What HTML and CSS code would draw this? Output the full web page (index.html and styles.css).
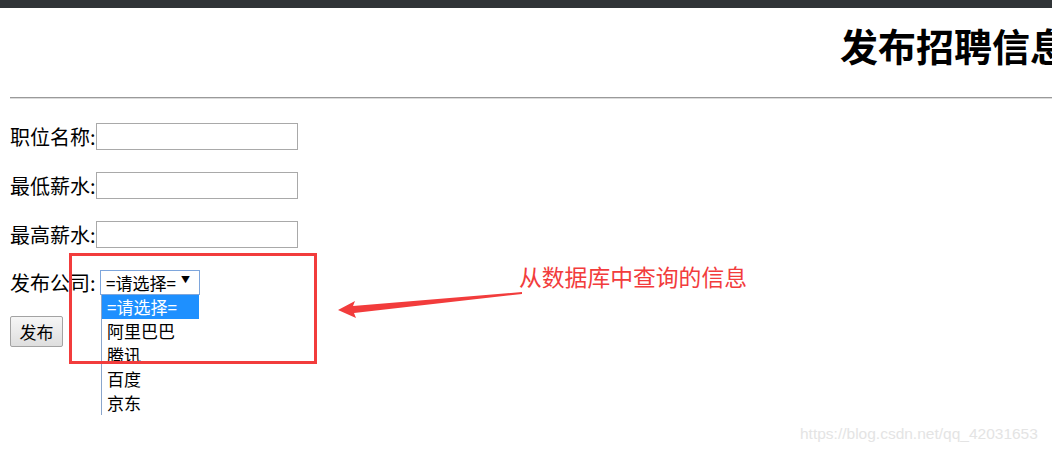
FILE: index.html
```html
<!DOCTYPE html>
<html lang="zh-CN">
<head>
    <meta charset="UTF-8">
    <meta name="viewport" content="width=device-width, initial-scale=1.0">
    <title>发布招聘信息</title>
    <link rel="stylesheet" href="styles.css">
</head>
<body>
    <div class="topbar"></div>

    <div class="page">
        <h1 class="title">发布招聘信息</h1>
        <hr class="rule">

        <form class="job-form">
            <div class="field">
                <label>职位名称:</label>
                <input type="text" class="text-input">
            </div>
            <div class="field">
                <label>最低薪水:</label>
                <input type="text" class="text-input">
            </div>
            <div class="field">
                <label>最高薪水:</label>
                <input type="text" class="text-input">
            </div>
            <div class="field field-company">
                <label>发布公司:&nbsp;</label>
                <div class="select-wrap">
                    <div class="select-box">
                        <span>=请选择=</span>
                        <span class="caret">▼</span>
                    </div>
                    <ul class="select-list">
                        <li class="active">=请选择=</li>
                        <li>阿里巴巴</li>
                        <li>腾讯</li>
                        <li>百度</li>
                        <li>京东</li>
                    </ul>
                </div>
            </div>
            <div class="actions">
                <button type="button" class="btn">发布</button>
            </div>
        </form>
    </div>

    <!-- annotation drawn over the screenshot -->
    <div class="note-box"></div>
    <svg class="note-arrow" width="1052" height="453" viewBox="0 0 1052 453">
        <polygon points="338,310 355,301 353,306 522,292 522,294 354,313 356,318" fill="#f23c3c"/>
    </svg>
    <div class="note-text">从数据库中查询的信息</div>

    <div class="watermark">https://blog.csdn.net/qq_42031653</div>
</body>
</html>
```

FILE: styles.css
```css
* {
    margin: 0;
    padding: 0;
    box-sizing: border-box;
}

body {
    width: 1052px;
    height: 453px;
    overflow: hidden;
    position: relative;
    background: #fff;
    color: #000;
    font-family: "Noto Sans CJK SC", "Noto Sans", sans-serif;
}

.topbar {
    height: 8px;
    background: #303437;
}

.page {
    padding: 0 0 0 10px;
}

.title {
    margin-top: 14px;
    padding-left: 830px;
    white-space: nowrap;
    font-size: 38px;
    line-height: 46px;
    font-weight: 700;
}

.rule {
    margin-top: 29px;
    border: none;
    border-top: 1px solid #9a9a9a;
    border-bottom: 1px solid #dcdcdc;
}

.job-form {
    display: flex;
    flex-direction: column;
    padding-top: 24px;
}

.field {
    display: flex;
    align-items: center;
    height: 27px;
    font-size: 20px;
    margin-bottom: 22px;
}

.field label {
    white-space: nowrap;
}

.text-input {
    width: 202px;
    height: 27px;
    border: 1px solid #a9a9a9;
    outline: none;
}

.field-company {
    margin-top: 0;
    height: 25px;
    margin-bottom: 0;
}

.select-wrap {
    position: relative;
}

.select-box {
    width: 100px;
    height: 25px;
    border: 1px solid #7ea6dc;
    display: flex;
    align-items: center;
    justify-content: space-between;
    padding: 0 9px 0 5px;
    font-size: 17px;
}

.caret {
    font-size: 9px;
    margin-top: -7px;
}

.select-list {
    position: absolute;
    top: 25px;
    left: 1px;
    width: 98px;
    list-style: none;
    border-left: 1px solid #8aa6cc;
    font-size: 17px;
    background: #fff;
}

.select-list li {
    height: 24px;
    line-height: 24px;
    padding-left: 5px;
}

.select-list li.active {
    background: #1e90ff;
    color: #fff;
}

.actions {
    margin-top: 21px;
}

.btn {
    width: 53px;
    height: 31px;
    font-family: inherit;
    font-size: 17px;
    color: #000;
    border: 1px solid #a3a3a3;
    border-radius: 2px;
    background: linear-gradient(#f6f6f6, #dedede);
}

.note-box {
    position: absolute;
    left: 69px;
    top: 253px;
    width: 248px;
    height: 111px;
    border: 3px solid #f23c3c;
}

.note-arrow {
    position: absolute;
    left: 0;
    top: 0;
}

.note-text {
    position: absolute;
    left: 519px;
    top: 262px;
    font-size: 22.8px;
    line-height: 30px;
    color: #f23c3c;
    white-space: nowrap;
}

.watermark {
    position: absolute;
    left: 800px;
    top: 425px;
    font-family: "Liberation Sans", Arial, sans-serif;
    font-size: 15.5px;
    color: #e4e4e4;
    white-space: nowrap;
}
```
